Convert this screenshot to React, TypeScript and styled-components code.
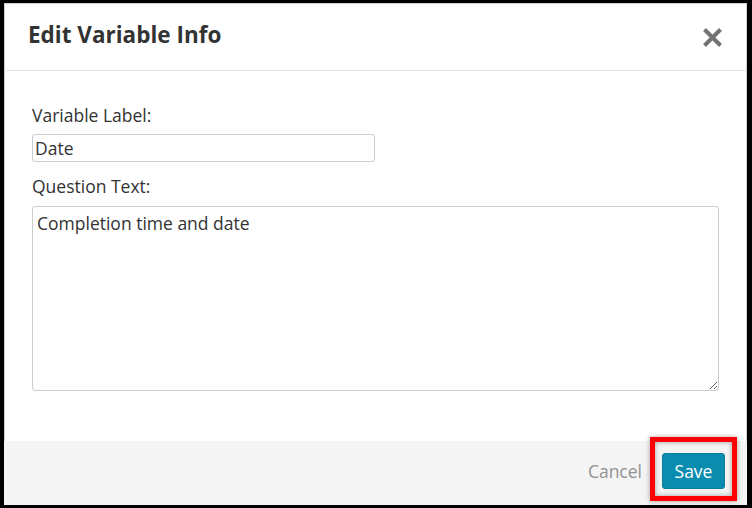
import styled, { createGlobalStyle } from "styled-components";

const GlobalStyle = createGlobalStyle`
  html, body {
    margin: 0;
    padding: 0;
    background: #000;
  }
  body {
    font-family: "Open Sans", "Liberation Sans", sans-serif;
  }
`;

const Backdrop = styled.div`
  width: 752px;
  height: 508px;
  box-sizing: border-box;
  padding: 3px 5px 3px 4px;
  background: #000;
`;

const Modal = styled.div`
  display: flex;
  flex-direction: column;
  height: 100%;
  background: #fff;
  box-shadow: inset 0 0 0 1px #cfcfcf;
`;

const Header = styled.div`
  display: flex;
  align-items: center;
  justify-content: space-between;
  height: 67px;
  padding: 0 24px;
  border-bottom: 1px solid #e5e5e5;
  flex-shrink: 0;
`;

const Title = styled.h2`
  margin: 0 0 4px;
  font-size: 22.5px;
  font-weight: 700;
  color: #333;
`;

const CloseButton = styled.button`
  display: flex;
  padding: 0;
  margin-top: 2px;
  border: none;
  background: none;
  cursor: pointer;
`;

const Body = styled.div`
  flex: 1;
  display: flex;
  flex-direction: column;
  padding: 32px 28px 0;
`;

const Label = styled.label`
  display: block;
  font-size: 17.5px;
  line-height: 24px;
  color: #333;
  margin-bottom: ${(p: { $gap?: number }) => p.$gap ?? 7}px;
`;

const TextInput = styled.input`
  box-sizing: border-box;
  width: 343px;
  height: 28px;
  padding: 0 2px;
  margin: 0 0 12px;
  border: 1px solid #ccc;
  border-radius: 3px;
  font-family: inherit;
  font-size: 17.5px;
  color: #333;
  outline: none;
`;

const TextArea = styled.textarea`
  box-sizing: border-box;
  width: 100%;
  height: 185px;
  margin: 0;
  padding: 4px 4px;
  border: 1px solid #ccc;
  border-radius: 3px;
  font-family: inherit;
  font-size: 17.5px;
  line-height: 24px;
  color: #333;
  resize: both;
  outline: none;
`;

const Footer = styled.div`
  display: flex;
  align-items: center;
  justify-content: flex-end;
  gap: 20px;
  height: 64px;
  box-sizing: border-box;
  padding: 0 22px 4px 0;
  background: #f4f4f4;
  flex-shrink: 0;
`;

const CancelLink = styled.button`
  padding: 0;
  border: none;
  background: none;
  font-family: inherit;
  font-size: 17.5px;
  color: #929292;
  cursor: pointer;
`;

const Highlight = styled.div`
  position: relative;
  display: flex;

  &::after {
    content: "";
    position: absolute;
    top: -16px;
    left: -12px;
    right: -12px;
    bottom: -12px;
    border: 5px solid #f00;
    box-shadow: 0 0 5px rgba(0, 0, 0, 0.35), inset 0 0 5px rgba(0, 0, 0, 0.35);
    pointer-events: none;
  }
`;

const SaveButton = styled.button`
  width: 63px;
  height: 36px;
  padding: 0;
  border: 1px solid #0b7f9f;
  border-radius: 3px;
  background: #0a8cae;
  font-family: inherit;
  font-size: 17.5px;
  color: #fff;
  cursor: pointer;
`;

const CloseIcon = () => (
  <svg width="21" height="21" viewBox="0 0 21 21">
    <path
      d="M2.5 2.5 L18.5 18.5 M18.5 2.5 L2.5 18.5"
      stroke="#737373"
      strokeWidth="4"
      fill="none"
    />
  </svg>
);

export default function App() {
  return (
    <>
      <GlobalStyle />
      <Backdrop>
        <Modal>
          <Header>
            <Title>Edit Variable Info</Title>
            <CloseButton aria-label="Close">
              <CloseIcon />
            </CloseButton>
          </Header>
          <Body>
            <Label htmlFor="var-label">Variable Label:</Label>
            <TextInput id="var-label" defaultValue="Date" />
            <Label htmlFor="question-text" $gap={8}>
              Question Text:
            </Label>
            <TextArea id="question-text" defaultValue="Completion time and date" />
          </Body>
          <Footer>
            <CancelLink>Cancel</CancelLink>
            <Highlight>
              <SaveButton>Save</SaveButton>
            </Highlight>
          </Footer>
        </Modal>
      </Backdrop>
    </>
  );
}
